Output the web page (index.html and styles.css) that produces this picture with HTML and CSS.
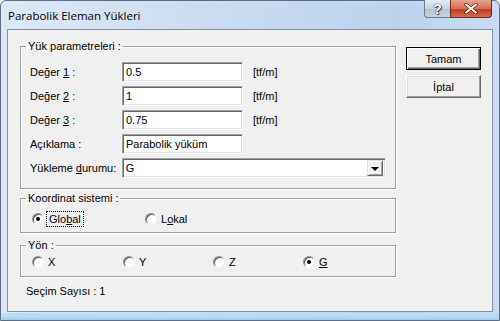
FILE: index.html
```html
<!DOCTYPE html>
<html lang="tr">
<head>
  <meta charset="UTF-8" />
  <title>Parabolik Eleman Yükleri</title>
  <link rel="stylesheet" href="styles.css">
</head>
<body>
  <div class="window">
    <div class="titlebar">
      <span class="title">Parabolik Eleman Yükleri</span>
      <div class="caption-btns">
        <span class="cbtn help">?</span>
        <span class="cbtn close">
          <svg width="14" height="11" viewBox="0 0 14 11">
            <path d="M2 1.5 L12 9.5 M12 1.5 L2 9.5" stroke="#5a1a10" stroke-width="3.4" stroke-linecap="round"/>
            <path d="M2 1.5 L12 9.5 M12 1.5 L2 9.5" stroke="#fff" stroke-width="2" stroke-linecap="round"/>
          </svg>
        </span>
      </div>
    </div>

    <div class="client">
      <div class="main">
        <fieldset class="group params">
          <legend>Yük parametreleri :</legend>
          <div class="row">
            <label>Değer <u>1</u> :</label>
            <input class="field" value="0.5">
            <span class="unit">[tf/m]</span>
          </div>
          <div class="row">
            <label>Değer <u>2</u> :</label>
            <input class="field" value="1">
            <span class="unit">[tf/m]</span>
          </div>
          <div class="row">
            <label>Değer <u>3</u> :</label>
            <input class="field" value="0.75">
            <span class="unit">[tf/m]</span>
          </div>
          <div class="row">
            <label>Açıklama :</label>
            <input class="field" value="Parabolik yüküm">
          </div>
          <div class="row">
            <label>Yükleme <u>d</u>urumu:</label>
            <div class="combo">
              <span class="combo-text">G</span>
              <span class="combo-btn"><span class="tri"></span></span>
            </div>
          </div>
        </fieldset>

        <fieldset class="group coord">
          <legend>Koordinat sistemi :</legend>
          <div class="radios">
            <span class="radio on"><span class="dot"></span><span class="focus">Glo<u>b</u>al</span></span>
            <span class="radio"><span class="dot"></span><span>L<u>o</u>kal</span></span>
          </div>
        </fieldset>

        <fieldset class="group yon">
          <legend>Yön :</legend>
          <div class="radios">
            <span class="radio"><span class="dot"></span><span>X</span></span>
            <span class="radio"><span class="dot"></span><span>Y</span></span>
            <span class="radio"><span class="dot"></span><span>Z</span></span>
            <span class="radio on"><span class="dot"></span><span><u>G</u></span></span>
          </div>
        </fieldset>

        <div class="count">Seçim Sayısı : 1</div>
      </div>

      <div class="side">
        <button class="btn default">Tamam</button>
        <button class="btn">İptal</button>
      </div>
    </div>
  </div>
</body>
</html>
```

FILE: styles.css
```css
body {
  margin: 0;
  font-family: 'Liberation Sans', Arial, sans-serif;
  font-size: 11px;
  color: #000;
}

.window {
  width: 500px;
  height: 321px;
  box-sizing: border-box;
  border: 1px solid #5c6f86;
  border-radius: 6px 6px 0 0;
  background: linear-gradient(to right, #dde9f6, #c6d9f0 55%, #bcd3ee 80%, #cadcf1);
  padding: 0 6px 0 6px;
  display: flex;
  flex-direction: column;
  position: relative;
}

.window::after {
  content: "";
  position: absolute;
  left: 0;
  right: 0;
  bottom: 0;
  height: 7px;
  background: linear-gradient(to bottom, #c4dcf2, #b3ddf6 60%, #9ccbe9);
}

.titlebar {
  height: 28px;
  display: flex;
  align-items: flex-start;
  justify-content: space-between;
}

.title {
  font-family: 'Open Sans', 'Liberation Sans', sans-serif;
  font-size: 11.5px;
  margin: 7px 0 0 1px;
  color: #000;
}

.caption-btns {
  display: flex;
  margin-right: 1px;
  margin-top: -1px;
}

.cbtn {
  height: 18px;
  display: flex;
  align-items: center;
  justify-content: center;
  box-sizing: border-box;
  border: 1px solid #6d7a8c;
  border-top: none;
}

.help {
  width: 26px;
  border-radius: 0 0 0 4px;
  border-right: none;
  background: linear-gradient(to bottom, #e6edf5, #c8d3e0 50%, #b4c1d1 51%, #c9d4df);
  color: #fff;
  font-weight: bold;
  font-size: 14px;
  text-shadow: 0 0 1px #334, 0 0 1px #334, 1px 1px 0 #556;
}

.close {
  width: 42px;
  border-radius: 0 0 4px 0;
  background: linear-gradient(to bottom, #e8a493, #d56f58 50%, #c2391c 51%, #d6694c);
  border-color: #6b2a1c;
}

.client {
  flex: 1;
  margin-bottom: 8px;
  border: 1px solid #8293a8;
  background: #f0f0f0;
  display: flex;
  padding: 10px 0 0 12px;
  position: relative;
  z-index: 1;
}

.main {
  width: 376px;
}

.group {
  margin: 0;
  border: 1px solid #a0a0a0;
  box-shadow: 1px 1px 0 #fff, inset 1px 1px 0 #fff;
  padding: 0 9px;
  min-width: 0;
}

.group legend {
  margin-left: -4px;
  padding: 0 2px;
  line-height: 13px;
}

.params {
  padding-top: 9px;
  padding-bottom: 10px;
  display: flex;
  flex-direction: column;
  gap: 4px;
}

.row {
  display: flex;
  align-items: center;
  height: 20px;
}

.row label {
  width: 92px;
}

.field {
  width: 121px;
  height: 20px;
  box-sizing: border-box;
  margin: 0;
  padding: 0 3px;
  font: inherit;
  color: #000;
  background: #fff;
  border: 1px solid;
  border-color: #a0a0a0 #fff #fff #a0a0a0;
  box-shadow: inset 1px 1px 0 #696969, inset -1px -1px 0 #e3e3e3;
  outline: none;
}

.unit {
  margin-left: 10px;
}

.combo {
  width: 265px;
  height: 20px;
  box-sizing: border-box;
  background: #fff;
  border: 1px solid;
  border-color: #a0a0a0 #fff #fff #a0a0a0;
  box-shadow: inset 1px 1px 0 #696969, inset -1px -1px 0 #e3e3e3;
  display: flex;
  align-items: center;
  justify-content: space-between;
  padding: 2px 2px 2px 0;
}

.combo-text {
  padding-left: 3px;
}

.combo-btn {
  width: 16px;
  height: 16px;
  box-sizing: border-box;
  background: #f0f0f0;
  border: 1px solid;
  border-color: #e3e3e3 #696969 #696969 #e3e3e3;
  box-shadow: inset 1px 1px 0 #fff, inset -1px -1px 0 #a0a0a0;
  display: flex;
  align-items: center;
  justify-content: center;
}

.tri {
  width: 0;
  height: 0;
  border-left: 4px solid transparent;
  border-right: 4px solid transparent;
  border-top: 4px solid #000;
  margin-top: 1px;
}

.coord {
  margin-top: 3px;
  padding-top: 7px;
  padding-bottom: 6px;
}

.yon {
  margin-top: 6px;
  padding-top: 3px;
  padding-bottom: 7px;
}

.radios {
  display: grid;
  height: 14px;
  align-items: center;
  padding-left: 2px;
}

.coord .radios {
  grid-template-columns: 113px 113px;
}

.yon .radios {
  grid-template-columns: 91px 90px 90px 90px;
}

.radio {
  display: flex;
  align-items: center;
  gap: 4px;
}

.dot {
  width: 12px;
  height: 12px;
  box-sizing: border-box;
  border-radius: 50%;
  background: #fff;
  border: 1px solid;
  border-color: #8a8a8a #f4f4f4 #f4f4f4 #8a8a8a;
  box-shadow: inset 1px 1px 0 #5a5a5a;
  display: flex;
  align-items: center;
  justify-content: center;
}

.radio.on .dot::after {
  content: "";
  width: 4px;
  height: 4px;
  border-radius: 50%;
  background: #000;
}

.focus {
  outline: 1px dotted #000;
  outline-offset: 1px;
  padding: 0 1px;
}

.count {
  margin: 8px 0 0 6px;
  line-height: 13px;
}

.side {
  margin-left: 10px;
  padding-top: 7px;
  display: flex;
  flex-direction: column;
  gap: 5px;
}

.btn {
  width: 75px;
  height: 23px;
  margin: 0;
  padding: 0;
  font: inherit;
  color: #000;
  background: #f0f0f0;
  border: 1px solid;
  border-color: #fff #696969 #696969 #fff;
  box-shadow: inset -1px -1px 0 #a0a0a0, inset 1px 1px 0 #e3e3e3;
}

.btn.default {
  border: 1px solid #000;
  box-shadow: inset 1px 1px 0 #fff, inset -1px -1px 0 #696969, inset -2px -2px 0 #a0a0a0;
}
```
